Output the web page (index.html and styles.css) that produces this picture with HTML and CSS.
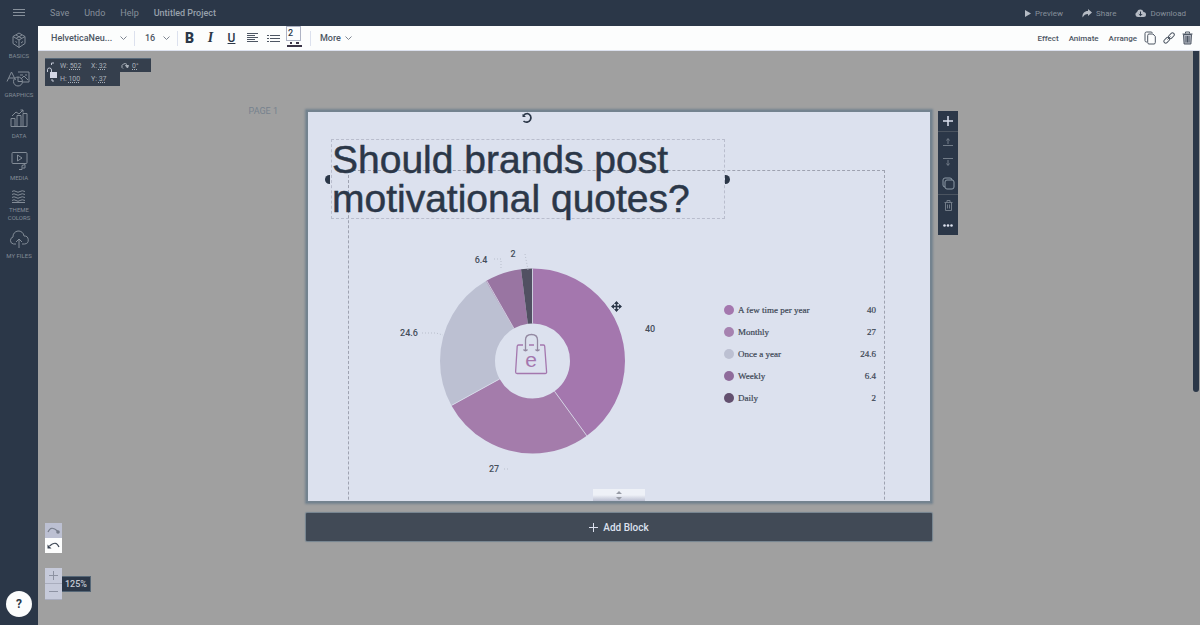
FILE: index.html
```html
<!DOCTYPE html>
<html lang="en">
<head>
<meta charset="utf-8">
<title>Untitled Project</title>
<link rel="stylesheet" href="styles.css">
</head>
<body>
<div class="app">
  <header class="topbar">
    <button class="menu" aria-label="Menu"><svg width="12" height="10" viewBox="0 0 12 10" stroke="currentColor"><path d="M0 1.500h12M0 4.500h12M0 7.500h12"/></svg></button>
    <nav class="menus">
      <button>Save</button><button>Undo</button><button>Help</button>
      <span class="project">Untitled Project</span>
    </nav>
    <div class="actions">
      <button><svg width="6" height="7" viewBox="0 0 6 7"><path d="M0 0l6 3.500-6 3.500z" fill="currentColor"/></svg>Preview</button>
      <button><svg width="10" height="9" viewBox="0 0 10 9"><path d="M6 0l4 3.500-4 3.500V5C3.500 5 2 6 .6 8.500 0 4.500 2.500 2 6 2z" fill="currentColor"/></svg>Share</button>
      <button><svg width="11" height="8" viewBox="0 0 11 8"><path d="M3 8A2.600 2.600 0 0 1 2 3 3.400 3.400 0 0 1 8.500 3 2.500 2.500 0 0 1 8.500 8z" fill="currentColor"/><path d="M5.500 2.500v4M3.800 5l1.700 1.700L7.200 5" stroke="#2b3748" fill="none"/></svg>Download</button>
    </div>
  </header>

  <div class="body">
    <nav class="sidebar">
      <button><svg width="16" height="17" viewBox="0 0 16 17" class="line"><path d="M8 1l6 3.500v7L8 15.500l-6-4v-7zM2 4.500L8 8l6-3.500M8 8v7.500M5 3l6 3.500M11 3L5 6.500M4.500 9.500l1.500 1M10 11l2-1.500"/></svg>BASICS</button>
      <button><svg width="26" height="20" viewBox="0 0 26 20" class="line"><path d="M1 13.500L5.500 4l4 8M3 10h5M12 4h11v10H17M14 7h3M19 7h2M15 11l3-3 4 4"/><circle cx="12" cy="13.500" r="4.500"/><path d="M12 9v4.500h4.500"/></svg>GRAPHICS</button>
      <button><svg width="18" height="22" viewBox="0 0 18 22" class="line"><path d="M1 19.500v-8h4v8zM7 19.500v-11h4v11zM13 19.500v-13h4v13zM1 19.500h16M2 9l4-4 3 2 4-4M10.500 3H13v2.500"/></svg>DATA</button>
      <button><svg width="17" height="23" viewBox="0 0 17 23" class="line"><rect x="1" y="4.500" width="15" height="11" rx="1"/><path d="M6.500 7v6l4.500-3zM8 21.500h3v-4l3-1v3.500h-2.500"/></svg>MEDIA</button>
      <button><svg width="14" height="13" viewBox="0 0 14 13" class="line"><path d="M0 1.500q2-1.500 4 0t4 0 5 0M0 4.500q2-1.500 4 0t4 0 5 0M0 7.500q2-1.500 4 0t4 0 5 0M0 10.500q2-1.500 4 0t4 0 5 0M0 12.500h13"/></svg><span>THEME<br>COLORS</span></button>
      <button><svg width="20" height="19" viewBox="0 0 20 19" class="line"><path d="M7 14H4.500a3.600 3.600 0 0 1-.5-7 5.500 5.500 0 0 1 11-1 4 4 0 0 1 .5 8H13M10 18V9M7 12l3-3 3 3"/></svg>MY FILES</button>
      <button class="help" aria-label="Help">?</button>
    </nav>

    <div class="workspace">
      <div class="toolbar">
        <label class="pick font"><select aria-label="Font family"><option>HelveticaNeu...</option></select><svg class="chev" width="7" height="5" viewBox="0 0 7 5"><path d="M.5.5l3 3 3-3"/></svg></label>
        <label class="pick size"><select aria-label="Font size"><option>16</option></select><svg class="chev" width="7" height="5" viewBox="0 0 7 5"><path d="M.5.5l3 3 3-3"/></svg></label>
        <div class="format">
          <button class="b">B</button><button class="i">I</button><button class="u">U</button>
          <button aria-label="Align"><svg width="11" height="10" viewBox="0 0 11 10" stroke="#4d5663"><path d="M0 .5h11M0 2.500h8M0 4.500h11M0 6.500h8M0 8.500h11"/></svg></button>
          <button aria-label="List"><svg width="13" height="9" viewBox="0 0 13 9" stroke="#4d5663"><path d="M0 1.500h2M3 1.500h10M0 4.500h2M3 4.500h10M0 7.500h2M3 7.500h10"/></svg></button>
          <button class="color" aria-label="Text color"><span class="hint">2</span><svg width="15" height="5" viewBox="0 0 15 5"><path d="M0 3h15v2H0z" fill="#3b3547"/><path d="M3 0h2v2H3zM9 0h3v2H9z" fill="#3b3547"/></svg></button>
        </div>
        <button class="more">More<svg class="chev" width="7" height="5" viewBox="0 0 7 5"><path d="M.5.5l3 3 3-3"/></svg></button>
        <div class="object">
          <div class="verbs"><button>Effect</button><button>Animate</button><button>Arrange</button></div>
          <button aria-label="Copy"><svg width="12" height="14" viewBox="0 0 12 14" class="dark"><path d="M3 11H2.500Q1 11 1 9.500V2.500Q1 1 2.500 1H7Q8 1 8.500 2"/><path d="M5 3h4l2.300 2.500v6Q11.300 13 10 13H5Q3.700 13 3.700 11.500v-7Q3.700 3 5 3z"/></svg></button>
          <button aria-label="Link"><svg width="12" height="12" viewBox="0 0 12 12" class="dark"><rect x="5.200" y="2" width="6.500" height="3.600" rx="1.800" transform="rotate(-45 8.400 3.800)"/><rect x=".5" y="6.500" width="6.500" height="3.600" rx="1.800" transform="rotate(-45 3.700 8.300)"/><path d="M4.500 7.500l3-3"/></svg></button>
          <button aria-label="Delete"><svg width="11" height="14" viewBox="0 0 11 14" class="dark"><path d="M1.500 3.500l.6 9.500h6.800l.6-9.500z" fill="#b4b8c2"/><path d="M.5 3h10M3.500 2.500V1h4v1.500M4 5v6.500M5.500 5v6.500M7 5v6.500"/></svg></button>
        </div>
      </div>

      <main class="stage">
        <div class="geometry">
          <div class="geo-row wide"><span>W: <u>502</u></span><span>X: <u>32</u></span><span class="rot"><svg width="8" height="7" viewBox="0 0 8 7" class="line"><path d="M1 5.500A3 3 0 0 1 6 2.500M1 5.500l1 1"/><path d="M4.500 3.500h3L6.500 6z" fill="currentColor"/></svg><u>0°</u></span></div>
          <div class="geo-row"><span>H: <u>100</u></span><span>Y: <u>37</u></span></div>
          <svg class="lock" width="12" height="22" viewBox="0 0 12 22"><path d="M1.500 11V8.500Q1.500 7 3.500 7t2 2v3M8 2H5.500v2M6 18v2h2" fill="none" stroke="#c4c9d6"/><rect x="4" y="11" width="7" height="6" fill="#d5d8e6"/></svg>
        </div>

        <div class="board">
          <span class="page-label">PAGE 1</span>
          <section class="page">
            <div class="slide">
              <div class="frame"></div>
              <h1 class="title">Should brands post motivational quotes?</h1>
              <i class="grip left"></i><i class="grip right"></i>
              <svg class="rotate" width="12" height="12" viewBox="0 0 12 12"><path d="M2.500 3.500Q4 1.500 6.500 1.500A4.400 4.400 0 1 1 2.500 9" fill="none" stroke="#2b3748" stroke-width="1.700"/><path d="M1.500 2v3H5z" fill="#2b3748"/></svg>
              <svg class="chart" width="280" height="240" viewBox="0 0 280 240">
                <g fill="none" stroke-width="55" transform="rotate(-90 144.500 121)">
                  <circle cx="144.500" cy="121" r="65" pathLength="100" stroke="#a477ae" stroke-dasharray="40 60"/>
                  <circle cx="144.500" cy="121" r="65" pathLength="100" stroke="#a47cab" stroke-dasharray="27 73" stroke-dashoffset="-40"/>
                  <circle cx="144.500" cy="121" r="65" pathLength="100" stroke="#bcc0d2" stroke-dasharray="24.6 75.4" stroke-dashoffset="-67"/>
                  <circle cx="144.500" cy="121" r="65" pathLength="100" stroke="#9975a2" stroke-dasharray="6.4 93.6" stroke-dashoffset="-91.600"/>
                  <circle cx="144.500" cy="121" r="65" pathLength="100" stroke="#515062" stroke-dasharray="2 98" stroke-dashoffset="-98"/>
                </g>
                <path d="M144.500 83.500v-55M166.500 151.300l32.400 44.600M111.600 139L63.400 165.500M125.900 88.400L98.600 40.600" stroke="#dce1ee" fill="none" stroke-width=".8"/>
                <g fill="none" stroke="#a477ae" stroke-width="1.300">
                  <path d="M135 105h-4.500q-1.200 0-1.300 1.200L127.600 132q0 1.500 1.500 1.500h28q1.600 0 1.500-1.500L156.700 106.200q0-1.200-1.200-1.200H152M141 105h5"/>
                  <path d="M137.500 110v-10q0-5.500 6-5.500t6 5.500v10" stroke="#9388a1"/>
                  <path d="M135.500 109.500q2 2.500 4 0M147.500 109.500q2 2.500 4 0" stroke="#9388a1"/>
                </g>
                <text class="bag-e" x="143" y="127">e</text>
                <g fill="none" stroke="#b9bfcc" stroke-dasharray="1 2"><path d="M106 19h7v10M137 14l3 16M34 93h14l7 2M116 229h6"/></g>
                <text x="93" y="23">6.4</text><text x="125" y="17">2</text><text x="262" y="92">40</text><text x="21" y="96">24.6</text><text x="106" y="232">27</text>
                <path d="M228.500 62v9M224 66.500h9" stroke="#2b3748" stroke-width="1.600"/><path d="M226 64l2.500-3 2.500 3zM226 69l2.500 3 2.500-3zM226 64l-3 2.500 3 2.500zM231 64l3 2.500-3 2.500z" fill="#2b3748"/>
              </svg>
              <table class="legend">
                <tr><td><i class="dot d1"></i>A few time per year</td><td>40</td></tr>
                <tr><td><i class="dot d2"></i>Monthly</td><td>27</td></tr>
                <tr><td><i class="dot d3"></i>Once a year</td><td>24.6</td></tr>
                <tr><td><i class="dot d4"></i>Weekly</td><td>6.4</td></tr>
                <tr><td><i class="dot d5"></i>Daily</td><td>2</td></tr>
              </table>
              <button class="resize" aria-label="Resize block"><svg width="6" height="10" viewBox="0 0 6 10" fill="#989ca6"><path d="M0 4l3-3 3 3zM0 7h6L3 10z"/></svg></button>
            </div>
            <button class="add"><svg width="9" height="9" viewBox="0 0 9 9" stroke="currentColor"><path d="M4.500 0v9M0 4.500h9"/></svg>Add Block</button>
          </section>
          <div class="page-tools">
            <button class="bright" aria-label="Add"><svg width="10" height="10" viewBox="0 0 10 10" stroke="currentColor" stroke-width="1.500"><path d="M5 0v10M0 5h10"/></svg></button>
            <button class="rule" aria-label="Move up"><svg width="10" height="10" viewBox="0 0 10 10" class="line"><path d="M0 8.500h10M5 7V2M3.500 3.500L5 1.500l1.500 2"/></svg></button>
            <button aria-label="Move down"><svg width="10" height="10" viewBox="0 0 10 10" class="line"><path d="M0 1.500h10M5 3v5M3.500 6.500L5 8.500l1.500-2"/></svg></button>
            <button class="mid" aria-label="Duplicate"><svg width="13" height="13" viewBox="0 0 13 13" class="line"><rect x="3" y="3" width="9" height="9" rx="2"/><path d="M3 10Q1 10 1 8V3Q1 1 3 1h5q2 0 2 2"/></svg></button>
            <button class="rule" aria-label="Delete"><svg width="9" height="11" viewBox="0 0 9 11" class="line"><path d="M.5 2.500h8M3 2V.500h3V2M1.500 3v7.500h6V3M3.500 4.500v4M5.500 4.500v4"/></svg></button>
            <button class="bright" aria-label="More"><svg width="10" height="3" viewBox="0 0 10 3" fill="currentColor"><circle cx="1.500" cy="1.500" r="1.300"/><circle cx="5" cy="1.500" r="1.300"/><circle cx="8.500" cy="1.500" r="1.300"/></svg></button>
          </div>
        </div>

        <div class="controls">
          <div class="pair">
            <button aria-label="Redo"><svg width="13" height="9" viewBox="0 0 13 9" fill="none" stroke="#777d8b" stroke-width="1.200"><path d="M1 6Q4 -1 10.500 5"/><circle cx="11" cy="6" r="1.800" fill="#777d8b" stroke="none"/></svg></button>
            <button class="on" aria-label="Undo"><svg width="13" height="9" viewBox="0 0 13 9" fill="none" stroke="#3b4553" stroke-width="1.200"><path d="M12 6Q9 -1 2.500 5"/><path d="M.5 3.500v4h4z" fill="#3b4553" stroke="none"/></svg></button>
          </div>
          <div class="pair">
            <button aria-label="Zoom in"><svg width="9" height="9" viewBox="0 0 9 9" stroke="#8d92a2"><path d="M4.500 0v9M0 4.500h9"/></svg></button>
            <button aria-label="Zoom out"><svg width="9" height="9" viewBox="0 0 9 9" stroke="#8d92a2"><path d="M0 4.500h9"/></svg></button>
            <output class="zoom">125%</output>
          </div>
        </div>
        <div class="scroll"></div>
      </main>
    </div>
  </div>
</div>
</body>
</html>
```

FILE: styles.css
```css
* { box-sizing: border-box; }
body { margin: 0; font-family: Roboto, "Liberation Sans", sans-serif; font-size: 9px; color: #2b3748; }
button { border: 0; padding: 0; background: none; font: inherit; color: inherit; display: flex; align-items: center; justify-content: center; }
svg { display: block; flex: none; }
.line { fill: none; stroke: currentColor; }
.dark { fill: none; stroke: #4d5663; }

.app { display: flex; flex-direction: column; height: 100vh; }
.topbar { display: flex; align-items: center; height: 26px; background: #2b3748; color: #87909b; flex: none; }
.menu { width: 38px; }
.menus { display: flex; align-items: center; gap: 15px; padding-left: 12px; }
.project { font-weight: 500; color: #98a1ac; }
.actions { display: flex; gap: 19px; margin-left: auto; padding-right: 14px; font-size: 8px; }
.actions button { gap: 4px; }
.actions svg { color: #b6bcc5; }

.body { display: flex; flex: 1; min-height: 0; }
.sidebar { display: flex; flex-direction: column; gap: 8px; width: 38px; padding: 6px 0 8px; background: #2b3748; color: #838c97; font-size: 6px; line-height: 8px; flex: none; }
.sidebar button { flex-direction: column; gap: 3px; white-space: nowrap; }
.sidebar .help { width: 26px; height: 26px; margin: auto auto 0; border-radius: 50%; background: #fcfdfd; color: #2b3748; font-size: 12px; font-weight: 700; }

.workspace { display: flex; flex-direction: column; flex: 1; min-width: 0; }
.toolbar { display: flex; align-items: center; height: 25px; padding: 0 7px 0 13px; background: #fcfdfd; border-bottom: 1px solid #dce1ee; font-weight: 500; color: #4d5663; flex: none; }
.pick { display: flex; align-items: center; padding-right: 7px; border-right: 1px solid #dce1ee; }
.pick select { flex: 1; min-width: 0; height: 15px; appearance: none; border: 0; padding: 0; background: none; font: inherit; color: inherit; }
.font { width: 84px; }
.size { width: 43px; padding-left: 10px; }
.chev { fill: none; stroke: #7d8490; }
.format { display: flex; align-items: center; height: 15px; padding: 0 5px 0 1px; border-right: 1px solid #dce1ee; }
.format button { width: 21px; height: 18px; color: #2b3748; }
.format .b { font-size: 14px; font-weight: 900; }
.format .i { font: italic 700 14px "Liberation Serif", serif; }
.format .u { font-size: 12px; text-decoration: underline; }
.format .color { position: relative; align-items: flex-end; }
.hint { position: absolute; left: 2px; top: -3px; width: 15px; height: 15px; padding-left: 1px; border: 1px solid #aeb3c4; text-align: left; line-height: 12px; }
.more { gap: 4px; padding-left: 9px; }
.object { display: flex; align-items: center; gap: 7px; margin-left: auto; }
.verbs { display: flex; gap: 10px; font-size: 8px; }

.stage { position: relative; flex: 1; padding-top: 59px; overflow: hidden; background: #a0a0a0; }
.geometry { position: absolute; left: 7px; top: 7px; color: #aab1ba; font-size: 7px; }
.geo-row { display: grid; grid-template-columns: 31px 29px; align-items: center; width: 75px; height: 14px; padding-left: 15px; background: #353f4d; }
.geo-row.wide { grid-template-columns: 31px 30px 1fr; width: 106px; border-top: 1px solid #566777; }
.geo-row u { text-decoration: underline dotted; text-underline-offset: 1px; }
.rot { display: flex; align-items: center; gap: 3px; }
.lock { position: absolute; left: 1px; top: 3px; }

.board { display: grid; grid-template-columns: 1fr 626px 1fr; align-items: start; }
.page-label { justify-self: end; padding-right: 28px; line-height: 2px; color: #76828e; }
.page { display: flex; flex-direction: column; gap: 10px; }
.slide { position: relative; height: 393px; border: 2px solid #74838f; background: #dce1ee; box-shadow: 0 0 2px 1px #74838f; overflow: hidden; }
.title { position: absolute; left: 23px; top: 27px; width: 394px; margin: 0; border: 1px dashed #b9bdcd; font: 400 39px/39px "Liberation Sans", Arial, sans-serif; -webkit-text-stroke: 0.500px #2b3748; }
.frame { position: absolute; left: 40px; top: 58px; width: 537px; height: 400px; border: 1px dashed #9ea2b0; }
.grip { position: absolute; top: 63px; width: 5px; height: 9px; background: #2b3748; }
.grip.left { left: 17px; border-radius: 5px 0 0 5px; }
.grip.right { left: 417px; border-radius: 0 5px 5px 0; }
.rotate { position: absolute; left: 213px; top: 0; }
.chart { position: absolute; left: 80px; top: 128px; }
.chart text { font: 500 9px Roboto, sans-serif; fill: #454e5b; text-anchor: middle; }
.chart .bag-e { font: 400 21px "Liberation Sans", sans-serif; fill: #a477ae; }
.legend { position: absolute; left: 416px; top: 187px; width: 152px; border-collapse: collapse; font: 9px "Liberation Serif", serif; color: #3b4553; -webkit-text-stroke: 0.200px #3b4553; }
.legend td { height: 22px; padding: 0; }
.legend td:last-child { text-align: right; }
.dot { display: inline-block; width: 10px; height: 10px; margin-right: 4px; border-radius: 50%; vertical-align: -2px; }
.d1 { background: #a477ae; }
.d2 { background: #a682b0; }
.d3 { background: #bcc0d2; }
.d4 { background: #8f6b9b; }
.d5 { background: #63506f; }
.resize { position: absolute; left: 50%; bottom: 0; width: 52px; height: 12px; margin-left: -26px; background: linear-gradient(#eef1f7 50%, #bcc0d2); }
.add { gap: 5px; height: 28px; border-radius: 1px; background: #414a56; color: #dce1ee; font-size: 10px; font-weight: 500; box-shadow: 0 0 1px 1px #74838f; }
.page-tools { width: 20px; margin: 1px 0 0 6px; background: #2b3748; color: #727c88; }
.page-tools button { width: 100%; height: 20px; }
.page-tools .rule { border-top: 1px solid #4b5460; height: 21px; }
.page-tools .mid { height: 22px; color: #8d9aa6; }
.page-tools .bright { color: #dce1ee; }

.controls { position: absolute; left: 7px; bottom: 25px; display: flex; flex-direction: column; gap: 15px; }
.pair { position: relative; width: 17px; }
.pair button { width: 17px; height: 15px; background: #bcc0d2; }
.pair:last-child button { height: 16px; border-bottom: 1px solid #a9adbd; background: #c6cada; }
.pair .on { background: #fcfdfd; }
.zoom { position: absolute; left: 17px; top: 8px; width: 29px; height: 16px; border: 1px solid #566777; border-left: 0; background: #2b3748; color: #c4c9d2; font-weight: 500; line-height: 14px; text-align: center; }
.scroll { position: absolute; right: 1px; top: 0; width: 6px; height: 341px; border-radius: 0 0 3px 3px; background: #2b3748; }
```
